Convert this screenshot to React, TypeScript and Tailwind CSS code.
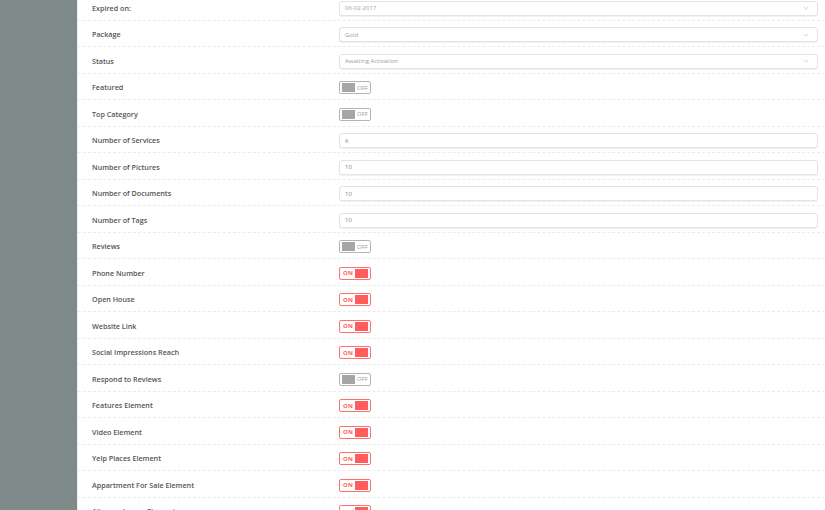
import React from "react";

type Row =
  | { label: string; kind: "select"; value: string }
  | { label: string; kind: "input"; value: string }
  | { label: string; kind: "toggle"; on: boolean };

const rows: Row[] = [
  { label: "Expired on:", kind: "select", value: "06-02-2017" },
  { label: "Package", kind: "select", value: "Gold" },
  { label: "Status", kind: "select", value: "Awaiting Activation" },
  { label: "Featured", kind: "toggle", on: false },
  { label: "Top Category", kind: "toggle", on: false },
  { label: "Number of Services", kind: "input", value: "6" },
  { label: "Number of Pictures", kind: "input", value: "10" },
  { label: "Number of Documents", kind: "input", value: "10" },
  { label: "Number of Tags", kind: "input", value: "10" },
  { label: "Reviews", kind: "toggle", on: false },
  { label: "Phone Number", kind: "toggle", on: true },
  { label: "Open House", kind: "toggle", on: true },
  { label: "Website Link", kind: "toggle", on: true },
  { label: "Social Impressions Reach", kind: "toggle", on: true },
  { label: "Respond to Reviews", kind: "toggle", on: false },
  { label: "Features Element", kind: "toggle", on: true },
  { label: "Video Element", kind: "toggle", on: true },
  { label: "Yelp Places Element", kind: "toggle", on: true },
  { label: "Appartment For Sale Element", kind: "toggle", on: true },
  { label: "Aliquam Lorem Element", kind: "toggle", on: true },
];

function Toggle({ on }: { on: boolean }) {
  if (on) {
    return (
      <div className="flex h-[13px] w-[32px] items-center justify-between rounded-[2px] border border-[#ff7070] bg-white pl-[3px] pr-[2px]">
        <span className="text-[6px] font-bold leading-none tracking-[0.3px] text-[#ff5a5a]">ON</span>
        <span className="h-[9px] w-[13px] bg-[#ff5c5c]" />
      </div>
    );
  }
  return (
    <div className="flex h-[13px] w-[32px] items-center gap-[2px] rounded-[2px] border border-[#b4b4b4] bg-white pl-[2px]">
      <span className="h-[9px] w-[13px] bg-[#a6a6a6]" />
      <span className="text-[6px] leading-none text-[#9a9a9a]">OFF</span>
    </div>
  );
}

function Field({ value, select }: { value: string; select?: boolean }) {
  return (
    <div className="flex h-[15px] flex-1 items-center justify-between rounded-[3px] border border-[#e3e3e3] bg-white pl-[5px] pr-[8px] shadow-[0_1px_0_#f2f2f2]">
      <span className={"text-[6px] leading-none " + (select ? "text-[#a0a0a0]" : "text-[#8a7a6a]")}>{value}</span>
      {select && (
        <svg width="6" height="4" viewBox="0 0 6 4" fill="none">
          <path d="M0.5 0.8 L3 3.2 L5.5 0.8" stroke="#c8c8c8" strokeWidth="0.8" />
        </svg>
      )}
    </div>
  );
}

export default function App() {
  return (
    <div
      className="flex h-[510px] w-[825px] overflow-hidden bg-white"
      style={{ fontFamily: '"Open Sans", "Liberation Sans", sans-serif' }}
    >
      <div className="w-[77px] shrink-0 bg-[#7e8b8a]" />
      <div className="flex-1 overflow-hidden border-l border-[#eef0f0]">
        <div className="-mt-[6px] flex flex-col">
          {rows.map((r, i) => (
            <div
              key={i}
              className="flex h-[26.5px] shrink-0 items-center border-b border-dashed border-[#ebebeb] pl-[14px] pr-[7px] pt-[3px]"
            >
              <div className="w-[247px] shrink-0 text-[7.2px] font-semibold text-[#555]">{r.label}</div>
              {r.kind === "toggle" ? (
                <Toggle on={r.on} />
              ) : (
                <Field value={r.value} select={r.kind === "select"} />
              )}
            </div>
          ))}
        </div>
      </div>
    </div>
  );
}
